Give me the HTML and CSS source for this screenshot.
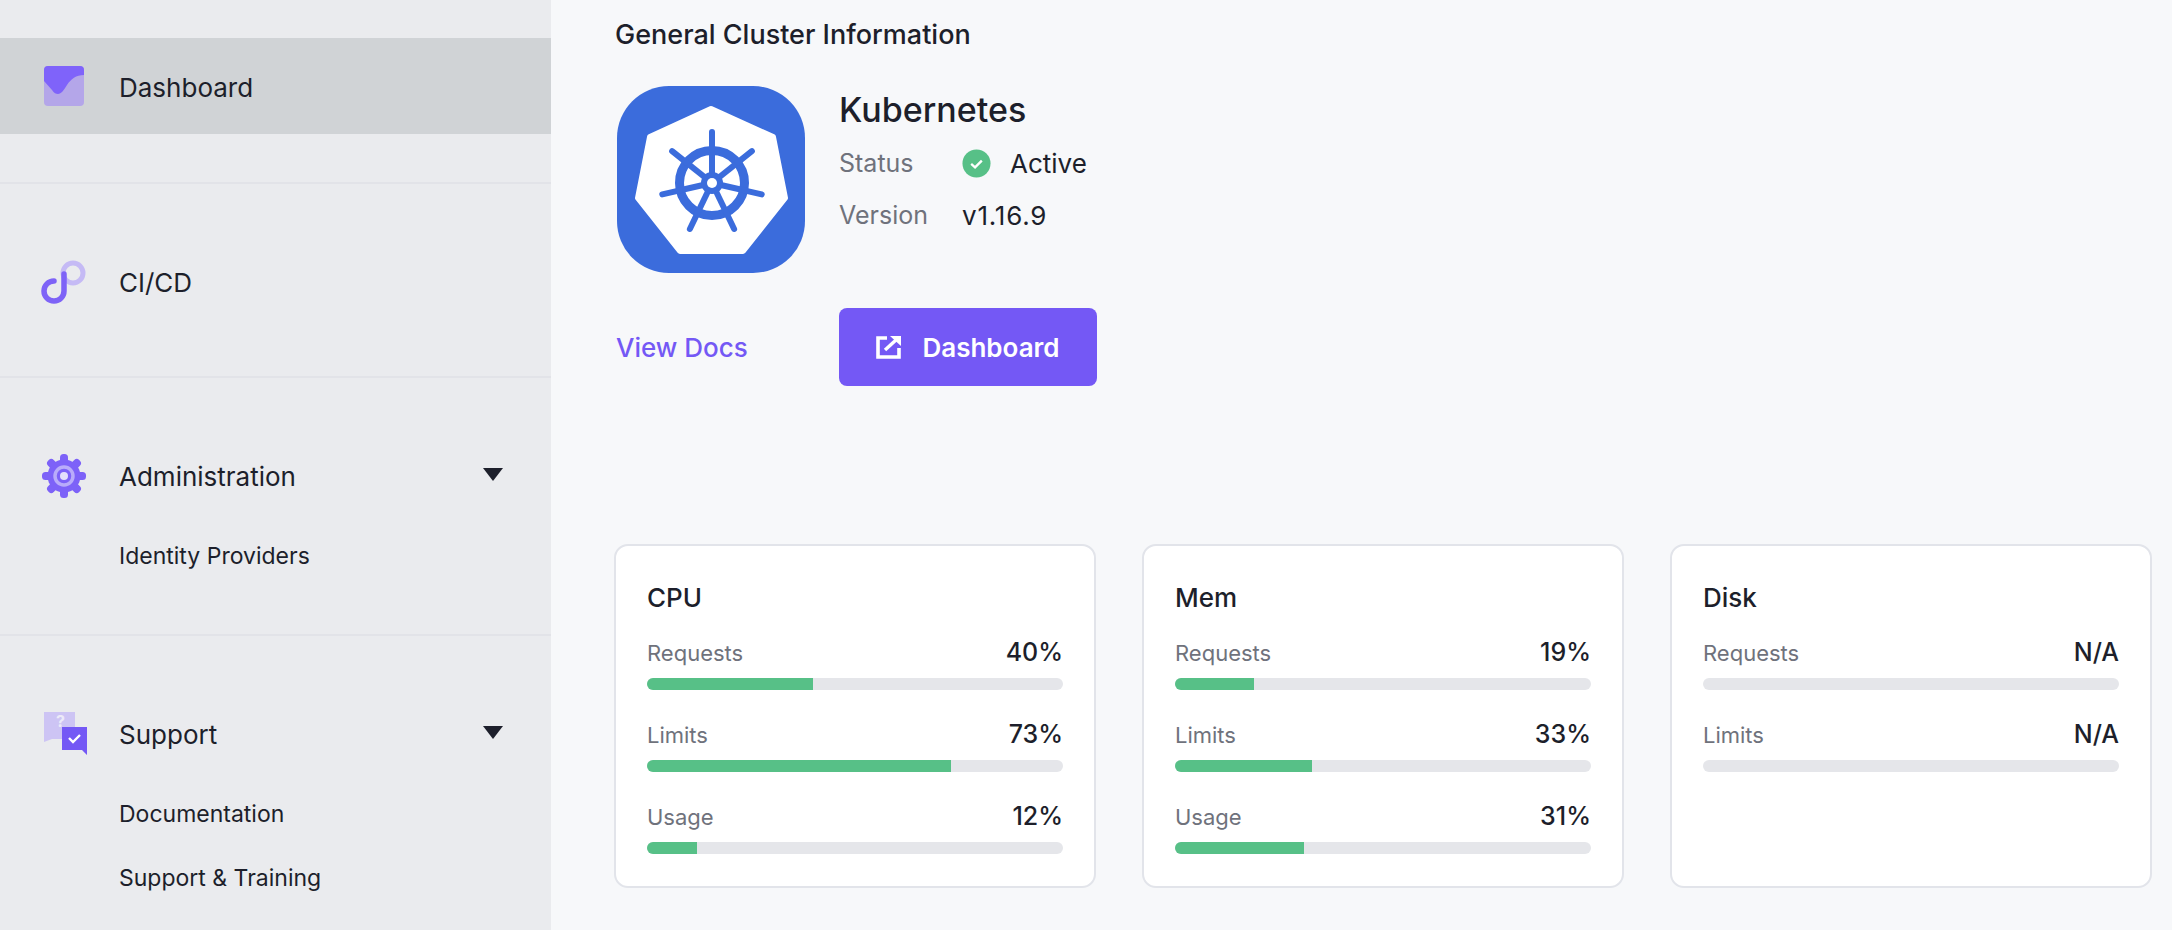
FILE: index.html
```html
<!DOCTYPE html>
<html lang="en">
<head>
	<meta charset="UTF-8">
	<title>Cluster Dashboard</title>
	<link rel="stylesheet" href="styles.css">
</head>
<body>
	<nav class="sidebar">
		<div class="nav-group">
			<a class="nav-row active">
				<svg class="nav-icon" viewBox="0 0 46 44">
					<rect x="3" y="2" width="40" height="40" rx="4" fill="#b4a6e9"/>
					<path d="M3 6a4 4 0 0 1 4-4h32a4 4 0 0 1 4 4v5c-8 0-13 4-17 10-3 5-6 9-9 9-2 0-4-1-6-4L3 17z" fill="#7f63fa"/>
				</svg>
				<span>Dashboard</span>
			</a>
		</div>
		<div class="nav-group">
			<a class="nav-row">
				<svg class="nav-icon" viewBox="0 0 46 44">
					<circle cx="32" cy="13" r="10" fill="none" stroke="#c5baf5" stroke-width="5"/>
					<path d="M23 14v17a10 10 0 1 1-10-10" fill="none" stroke="#7e63f7" stroke-width="5.5" stroke-linecap="round"/>
				</svg>
				<span>CI/CD</span>
			</a>
		</div>
		<div class="nav-group">
			<a class="nav-row">
				<svg class="nav-icon" viewBox="0 0 46 44">
					<g fill="#7d62f8">
						<rect x="19" y="0" width="8" height="44" rx="3.5"/>
						<rect x="1" y="18" width="44" height="8" rx="3.5"/>
						<rect x="19" y="0" width="8" height="44" rx="3.5" transform="rotate(45 23 22)"/>
						<rect x="19" y="0" width="8" height="44" rx="3.5" transform="rotate(-45 23 22)"/>
						<circle cx="23" cy="22" r="16.5"/>
					</g>
					<circle cx="23" cy="22" r="9" fill="none" stroke="#b9acfa" stroke-width="3.5"/>
					<circle cx="23" cy="22" r="4" fill="#e4e0fb"/>
				</svg>
				<span>Administration</span>
				<i class="caret"></i>
			</a>
			<a class="nav-sub">Identity Providers</a>
		</div>
		<div class="nav-group">
			<a class="nav-row">
				<svg class="nav-icon" viewBox="0 0 46 44">
					<path d="M3 0h31v27H11l-8 3z" fill="#cdc4f4"/>
					<text x="15" y="15" class="help-mark">?</text>
					<path d="M21 15h25v28l-5-5H21z" fill="#7458f5"/>
					<path d="M28 26l4 4 7-7" fill="none" stroke="#fff" stroke-width="2.4"/>
				</svg>
				<span>Support</span>
				<i class="caret"></i>
			</a>
			<a class="nav-sub">Documentation</a>
			<a class="nav-sub">Support &amp; Training</a>
		</div>
	</nav>

	<main class="content">
		<h2 class="section-title">General Cluster Information</h2>

		<div class="cluster">
			<svg class="cluster-logo" viewBox="0 0 188 187">
				<defs>
					<g id="spoke">
						<line x1="95" y1="97" x2="95" y2="62" stroke="#3b6cdc" stroke-width="6"/>
						<line x1="95" y1="64" x2="95" y2="46" stroke="#3b6cdc" stroke-width="6" stroke-linecap="round"/>
					</g>
				</defs>
				<rect width="188" height="187" rx="52" fill="#3b6cdc"/>
				<path d="M94 23l62 28 12 61-42 53H63L21 112l12-61z" fill="#fff" stroke="#fff" stroke-width="6" stroke-linejoin="round"/>
				<circle cx="95" cy="97" r="32.5" fill="none" stroke="#3b6cdc" stroke-width="9"/>
				<g>
					<use href="#spoke"/>
					<use href="#spoke" transform="rotate(51.43 95 97)"/>
					<use href="#spoke" transform="rotate(102.86 95 97)"/>
					<use href="#spoke" transform="rotate(154.29 95 97)"/>
					<use href="#spoke" transform="rotate(205.71 95 97)"/>
					<use href="#spoke" transform="rotate(257.14 95 97)"/>
					<use href="#spoke" transform="rotate(308.57 95 97)"/>
				</g>
				<circle cx="95" cy="97" r="11" fill="#3b6cdc"/>
				<circle cx="95" cy="97" r="5" fill="#fff"/>
			</svg>
			<div class="cluster-info">
				<h1 class="cluster-name">Kubernetes</h1>
				<div class="info-row">
					<span class="info-label">Status</span>
					<span class="info-value">
						<svg class="status-icon" viewBox="0 0 30 30">
							<circle cx="15" cy="15" r="14.5" fill="#57c087"/>
							<path d="M9.5 15.5l4 3.5 7-7" fill="none" stroke="#fff" stroke-width="2.4"/>
						</svg>
						Active
					</span>
				</div>
				<div class="info-row">
					<span class="info-label">Version</span>
					<span class="info-value version">v1.16.9</span>
				</div>
			</div>
		</div>

		<div class="actions">
			<a class="docs-link">View Docs</a>
			<a class="btn-primary">
				<svg class="btn-icon" viewBox="0 0 26 24">
					<path d="M11 3H2v19h21v-9" fill="none" stroke="#fff" stroke-width="3.6"/>
					<path d="M9 15L20 5" fill="none" stroke="#fff" stroke-width="3.4"/>
					<path d="M14 1h11v10z" fill="#fff"/>
				</svg>
				Dashboard
			</a>
		</div>

		<div class="cards">
			<section class="card">
				<h3 class="card-title">CPU</h3>
				<div class="metric">
					<div class="metric-head"><span class="metric-label">Requests</span><span class="metric-value">40%</span></div>
					<div class="bar"><div class="bar-fill" style="width:40%"></div></div>
				</div>
				<div class="metric">
					<div class="metric-head"><span class="metric-label">Limits</span><span class="metric-value">73%</span></div>
					<div class="bar"><div class="bar-fill" style="width:73%"></div></div>
				</div>
				<div class="metric">
					<div class="metric-head"><span class="metric-label">Usage</span><span class="metric-value">12%</span></div>
					<div class="bar"><div class="bar-fill" style="width:12%"></div></div>
				</div>
			</section>
			<section class="card">
				<h3 class="card-title">Mem</h3>
				<div class="metric">
					<div class="metric-head"><span class="metric-label">Requests</span><span class="metric-value">19%</span></div>
					<div class="bar"><div class="bar-fill" style="width:19%"></div></div>
				</div>
				<div class="metric">
					<div class="metric-head"><span class="metric-label">Limits</span><span class="metric-value">33%</span></div>
					<div class="bar"><div class="bar-fill" style="width:33%"></div></div>
				</div>
				<div class="metric">
					<div class="metric-head"><span class="metric-label">Usage</span><span class="metric-value">31%</span></div>
					<div class="bar"><div class="bar-fill" style="width:31%"></div></div>
				</div>
			</section>
			<section class="card">
				<h3 class="card-title">Disk</h3>
				<div class="metric">
					<div class="metric-head"><span class="metric-label">Requests</span><span class="metric-value">N/A</span></div>
					<div class="bar"></div>
				</div>
				<div class="metric">
					<div class="metric-head"><span class="metric-label">Limits</span><span class="metric-value">N/A</span></div>
					<div class="bar"></div>
				</div>
			</section>
		</div>
	</main>
</body>
</html>
```

FILE: styles.css
```css
*{padding:0;margin:0;box-sizing:border-box;}
html,body{height:100%;overflow:hidden;}
body{display:flex;background:#f7f8fa;color:#1d1f2b;font-family:Inter,"Liberation Sans",sans-serif;font-size:26px;}

/* sidebar */
.sidebar{flex:0 0 551px;background:#eaebee;padding-top:38px;}
.nav-group{padding:50px 0 46px;border-bottom:2px solid #e2e3e8;}
.nav-group:first-child{padding:0 0 48px;}
.nav-group:last-child{border-bottom:0;}
.nav-row{display:flex;align-items:center;height:96px;padding:0 48px 0 41px;}
.nav-row.active{background:#d0d3d6;}
.nav-row.active span{padding-top:3px;}
.nav-icon{width:46px;height:44px;margin-right:32px;flex:none;}
.help-mark{font-size:16px;font-weight:700;fill:#eceaf8;}
.caret{margin-left:auto;margin-bottom:4px;width:0;height:0;border-left:10px solid transparent;border-right:10px solid transparent;border-top:13px solid #1d1f2b;}
.nav-sub{display:flex;align-items:center;height:64px;padding-left:119px;font-size:23px;}

/* main area */
.content{flex:1;padding:18px 20px 0 63px;}
.section-title{font-size:27px;font-weight:500;line-height:34px;padding-left:1px;}
.cluster{display:flex;margin-top:34px;}
.cluster-logo{width:188px;height:187px;margin-left:3px;flex:none;}
.cluster-info{margin-left:34px;}
.cluster-name{font-size:34px;font-weight:500;line-height:48px;margin-bottom:3px;}
.info-row{display:flex;align-items:center;height:52px;}
.info-label{width:123px;color:#6f727c;font-size:25px;}
.info-value{display:flex;align-items:center;}
.version{letter-spacing:.8px;}
.status-icon{width:29px;height:29px;margin-right:19px;}

.actions{display:flex;align-items:center;margin-top:35px;padding-left:2px;}
.docs-link{width:223px;color:#7458f5;font-weight:500;}
.btn-primary{display:flex;align-items:center;justify-content:center;width:258px;height:78px;border-radius:8px;background:#7458f5;color:#fff;font-weight:600;}
.btn-icon{width:26px;height:24px;margin-right:20px;}

.cards{display:grid;grid-template-columns:repeat(3,1fr);gap:46px;margin-top:158px;}
.card{height:344px;padding:35px 31px 0;background:#fff;border:2px solid #e2e4ea;border-radius:14px;}
.card-title{font-size:26px;font-weight:500;line-height:34px;margin-bottom:22px;}
.metric{height:82px;}
.metric-head{display:flex;justify-content:space-between;align-items:center;height:36px;margin-bottom:5px;}
.metric-label{color:#6f727c;font-size:22px;margin-top:-4px;}
.metric-value{font-size:25px;font-weight:500;margin-top:-6px;}
.bar{height:12px;border-radius:6px;background:#e5e6ea;overflow:hidden;}
.bar-fill{height:100%;background:#57c087;}
```
